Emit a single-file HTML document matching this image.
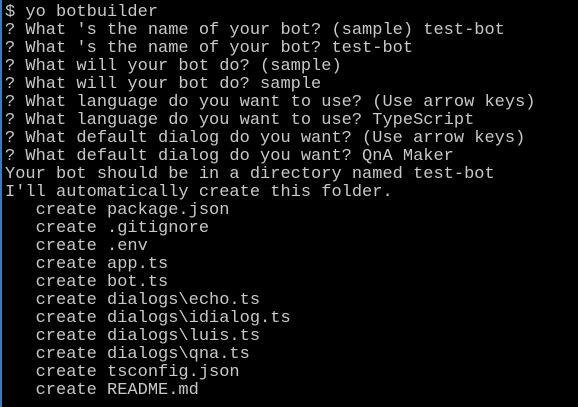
<!DOCTYPE html>
<html><head><meta charset="utf-8"><style>
html,body{margin:0;padding:0;background:#000;}
body{width:578px;height:407px;overflow:hidden;position:relative;}
.bl{position:absolute;left:0;top:0;width:2px;height:407px;background:#3a78c8;}
pre{margin:0;position:absolute;left:5px;top:4px;font-family:"Liberation Mono",monospace;font-size:17px;line-height:18px;color:#c8c8c8;white-space:pre;}
</style></head><body>
<div class="bl"></div>
<pre>$ yo botbuilder
? What 's the name of your bot? (sample) test-bot
? What 's the name of your bot? test-bot
? What will your bot do? (sample)
? What will your bot do? sample
? What language do you want to use? (Use arrow keys)
? What language do you want to use? TypeScript
? What default dialog do you want? (Use arrow keys)
? What default dialog do you want? QnA Maker
Your bot should be in a directory named test-bot
I'll automatically create this folder.
   create package.json
   create .gitignore
   create .env
   create app.ts
   create bot.ts
   create dialogs\echo.ts
   create dialogs\idialog.ts
   create dialogs\luis.ts
   create dialogs\qna.ts
   create tsconfig.json
   create README.md</pre>
</body></html>
